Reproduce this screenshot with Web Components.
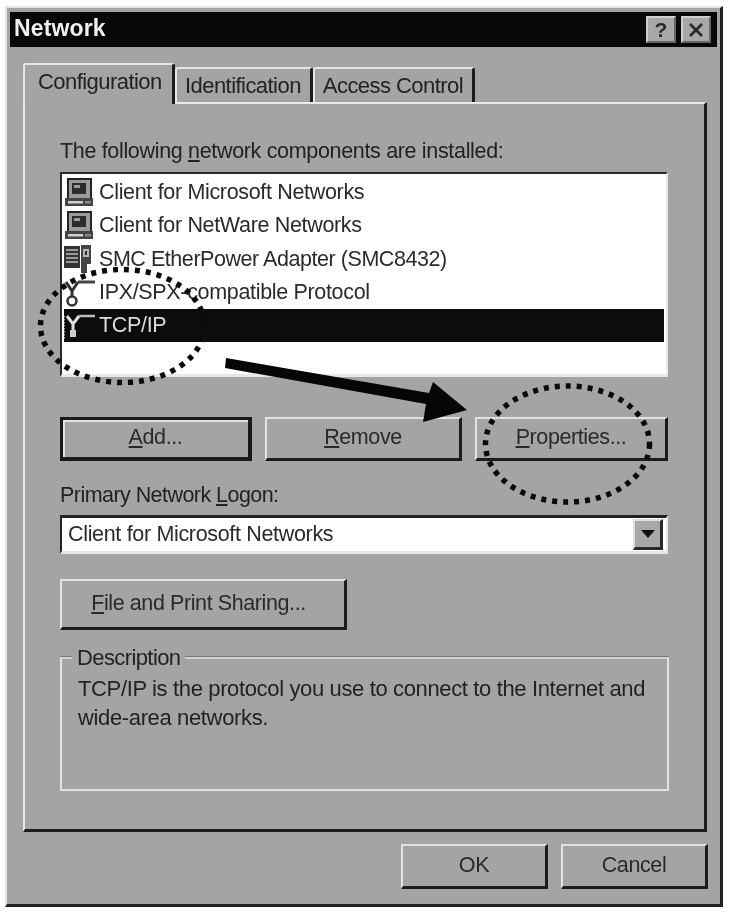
<!DOCTYPE html>
<html>
<head>
<meta charset="utf-8">
<title>Network</title>
<style>
  html, body { margin: 0; background: #fff; }
  body { width: 729px; height: 912px; overflow: hidden; position: relative; font-family: "Liberation Sans", Arial, sans-serif; }
  .blur { display: flow-root; filter: blur(0.6px); width: 729px; height: 912px; }
</style>
</head>
<body>
<div class="blur">
<win-dialog heading="Network">
  <win-tabs slot="tabs">
    <win-tab active>Configuration</win-tab>
    <win-tab>Identification</win-tab>
    <win-tab>Access Control</win-tab>
  </win-tabs>

  <win-label style="margin-top:34px">The following <u>n</u>etwork components are installed:</win-label>
  <win-list style="margin-top:8px">
    <win-row icon="client">Client for Microsoft Networks</win-row>
    <win-row icon="client">Client for NetWare Networks</win-row>
    <win-row icon="adapter" style="letter-spacing:-0.45px">SMC EtherPower Adapter (SMC8432)</win-row>
    <win-row icon="protocol">IPX/SPX-compatible Protocol</win-row>
    <win-row icon="protocol" selected>TCP/IP</win-row>
  </win-list>
  <div style="display:flex;gap:13px;margin-top:40px;width:608px">
    <win-button default style="width:192px;height:44px"><u>A</u>dd...</win-button>
    <win-button style="width:197px;height:44px"><u>R</u>emove</win-button>
    <win-button style="width:193px;height:44px"><u>P</u>roperties...</win-button>
  </div>
  <win-label style="margin-top:21px;letter-spacing:-0.55px">Primary Network <u>L</u>ogon:</win-label>
  <win-combo style="margin-top:7px">Client for Microsoft Networks</win-combo>
  <win-button style="width:287px;height:51px;margin-top:25px;padding-right:9px"><u>F</u>ile and Print Sharing...</win-button>
  <win-group heading="Description" style="margin-top:27px">TCP/IP is the protocol you use to connect to the Internet and wide-area networks.</win-group>

  <win-button slot="actions" style="width:147px;height:45px">OK</win-button>
  <win-button slot="actions" style="width:147px;height:45px">Cancel</win-button>
</win-dialog>
<call-outs></call-outs>
</div>

<script>
const FONT = `font-family: "Liberation Sans", Arial, sans-serif;`;

class WinDialog extends HTMLElement {
  constructor() {
    super();
    this.attachShadow({ mode: "open" });
  }
  connectedCallback() {
    this.shadowRoot.innerHTML = `
      <style>
        :host {
          display: block; box-sizing: border-box;
          width: 718px; height: 901px; margin: 6px 0 0 5px; padding: 4px 2px 0 3px;
          background: #a4a4a4; color: #1d1d1d; ${FONT}
          border-style: solid; border-width: 2px 3px 3px 2px;
          border-color: #e4e4e4 #222 #222 #e4e4e4;
        }
        .title {
          display: flex; align-items: center; height: 35px; background: #080808;
          margin-right: 1px; padding: 0 6px 0 4px;
          color: #f0f0f0; font-size: 23px; font-weight: bold; letter-spacing: 0.15px;
        }
        .title span { flex: 1; padding-bottom: 3px; }
        .cap {
          display: flex; align-items: center; justify-content: center; box-sizing: border-box;
          width: 30px; height: 27px; margin-left: 5px;
          background: #a8a8a8; color: #2a2a2a; font-size: 21px; font-weight: bold;
          border-style: solid; border-width: 2px;
          border-color: #cfcfcf #666 #666 #cfcfcf;
        }
        .tabs { margin: 16px 0 0 13px; height: 39px; position: relative; z-index: 1; }
        .panel {
          box-sizing: border-box; margin-left: 13px; width: 684px; height: 730px;
          padding: 0 36px 0 35px;
          border-style: solid; border-width: 2px 3px 3px 2px;
          border-color: #eaeaea #1c1c1c #1c1c1c #eaeaea;
        }
        .actions { display: flex; justify-content: flex-end; gap: 13px; margin: 12px 10px 0 0; }
      </style>
      <div class="title"><span>${this.getAttribute("heading")}</span>
        <div class="cap">?</div>
        <div class="cap"><svg width="18" height="16" viewBox="0 0 18 16"><path d="M3 2 L15 14 M15 2 L3 14" stroke="#2a2a2a" stroke-width="2.8" fill="none"/></svg></div>
      </div>
      <div class="tabs"><slot name="tabs"></slot></div>
      <div class="panel"><slot></slot></div>
      <div class="actions"><slot name="actions"></slot></div>`;
  }
}

class WinTabs extends HTMLElement {
  constructor() {
    super();
    this.attachShadow({ mode: "open" }).innerHTML = `
      <style>:host { display: flex; align-items: flex-end; height: 100%; }</style>
      <slot></slot>`;
  }
}

class WinTab extends HTMLElement {
  constructor() {
    super();
    this.attachShadow({ mode: "open" }).innerHTML = `
      <style>
        :host {
          display: flex; box-sizing: border-box; align-items: center; justify-content: center;
          height: 35px; padding: 0 9px 0 8px; margin-bottom: 0;
          font-size: 22px; letter-spacing: -0.55px; color: #222;
          border-style: solid; border-width: 2px 3px 0 2px;
          border-color: #e6e6e6 #1c1c1c #1c1c1c #e6e6e6;
          border-radius: 3px 3px 0 0;
          background: #a4a4a4;
        }
        :host([active]) {
          height: 41px; margin-bottom: -2px; padding: 0 8px 6px 13px; width: 152px;
          position: relative; z-index: 2; justify-content: flex-start;
        }
      </style>
      <slot></slot>`;
  }
}

class WinLabel extends HTMLElement {
  constructor() {
    super();
    this.attachShadow({ mode: "open" }).innerHTML = `
      <style>
        :host { display: block; height: 26px; line-height: 26px; font-size: 21.5px; letter-spacing: -0.33px; color: #222; white-space: nowrap; }
      </style>
      <slot></slot>`;
  }
}

class WinList extends HTMLElement {
  constructor() {
    super();
    this.attachShadow({ mode: "open" }).innerHTML = `
      <style>
        :host {
          display: block; box-sizing: border-box; width: 608px; height: 205px;
          background: #fff; padding: 2px 2px 0 2px;
          border-style: solid; border-width: 2px 2px 3px 2px;
          border-color: #2a2a2a #e8e8e8 #e8e8e8 #2a2a2a;
        }
      </style>
      <slot></slot>`;
  }
}

const ICONS = {
  client: `
    <rect x="4" y="1" width="23" height="20" fill="#9a9a9a" stroke="#222" stroke-width="2"/>
    <rect x="8" y="5" width="14" height="11" fill="#2c2c2c"/>
    <rect x="10" y="7" width="6" height="3" fill="#9c9c9c"/>
    <path d="M1 20 H29 V28 H1 Z" fill="#444"/>
    <rect x="4" y="23" width="15" height="2.5" fill="#cfcfcf"/>
    <rect x="21" y="23" width="6" height="2.5" fill="#888"/>`,
  adapter: `
    <rect x="0" y="2" width="16" height="22" fill="#333"/>
    <path d="M2 6 H14 M2 10 H14 M2 14 H14 M2 18 H14" stroke="#999" stroke-width="1.8"/>
    <path d="M17 1 H27 V20 H23 V29 H17 Z" fill="#444"/>
    <rect x="19" y="5" width="6" height="8" fill="#b5b5b5"/>
    <rect x="21" y="7" width="2" height="4" fill="#333"/>`,
  protocol: `
    <path d="M2 4 L8 13 L14 4 M8 13 V19" stroke="#333" stroke-width="3" fill="none"/>
    <path d="M14 4 H31" stroke="#444" stroke-width="3"/>
    <circle cx="8" cy="23" r="4.5" fill="none" stroke="#333" stroke-width="2.5"/>`,
  protocolSel: `
    <path d="M3 5 L9 13 L15 5 M9 13 V20" stroke="#ddd" stroke-width="3" fill="none"/>
    <path d="M15 5 H31" stroke="#bbb" stroke-width="2.5"/>
    <rect x="6" y="19" width="6" height="7" fill="#ccc"/>
    <path d="M0.5 5 V28" stroke="#aaa" stroke-width="1" stroke-dasharray="1.5 1.5"/>`
};

class WinRow extends HTMLElement {
  constructor() {
    super();
    this.attachShadow({ mode: "open" });
  }
  connectedCallback() {
    const selected = this.hasAttribute("selected");
    let icon = this.getAttribute("icon");
    if (selected) icon = "protocolSel";
    this.shadowRoot.innerHTML = `
      <style>
        :host {
          display: flex; align-items: center; height: 33.3px; box-sizing: border-box;
          font-size: 21.5px; letter-spacing: -0.33px; color: #2a2a2a; white-space: nowrap;
        }
        :host([selected]) { background: #0c0c0c; color: #dcdcdc; }
        svg { flex: none; width: 30px; height: 30px; margin-right: 5px; overflow: visible; }
      </style>
      <svg viewBox="0 0 30 30">${ICONS[icon]}</svg><slot></slot>`;
  }
}

class WinButton extends HTMLElement {
  constructor() {
    super();
    this.attachShadow({ mode: "open" }).innerHTML = `
      <style>
        :host {
          display: flex; box-sizing: border-box; align-items: center; justify-content: center; flex: none;
          font-size: 21.5px; letter-spacing: -0.4px; color: #2a2a2a; white-space: nowrap;
          background: #a4a4a4; padding-bottom: 2px;
          border-style: solid; border-width: 2px 3px 3px 2px;
          border-color: #e2e2e2 #1c1c1c #1c1c1c #e2e2e2;
        }
        :host([default]) {
          border-width: 3px 4px 4px 3px;
          border-color: #1a1a1a;
          box-shadow: inset 2px 2px 0 #e2e2e2;
        }
      </style>
      <slot></slot>`;
  }
}

class WinCombo extends HTMLElement {
  constructor() {
    super();
    this.attachShadow({ mode: "open" }).innerHTML = `
      <style>
        :host {
          display: flex; box-sizing: border-box; align-items: center; width: 608px; height: 39px;
          background: #fff; padding: 0 3px 0 6px;
          font-size: 21.5px; letter-spacing: -0.33px; color: #2a2a2a; white-space: nowrap;
          border-style: solid; border-width: 3px 2px 3px 2px;
          border-color: #222 #e8e8e8 #e8e8e8 #222;
        }
        .txt { flex: 1; }
        .btn {
          display: flex; align-items: center; justify-content: center; box-sizing: border-box;
          width: 30px; height: 31px; background: #a8a8a8;
          border-style: solid; border-width: 2px 3px 3px 2px;
          border-color: #dfdfdf #2a2a2a #2a2a2a #dfdfdf;
        }
      </style>
      <div class="txt"><slot></slot></div>
      <div class="btn"><svg width="14" height="8" viewBox="0 0 14 8"><path d="M0 0 H14 L7 8 Z" fill="#111"/></svg></div>`;
  }
}

class WinGroup extends HTMLElement {
  constructor() {
    super();
    this.attachShadow({ mode: "open" });
  }
  connectedCallback() {
    this.shadowRoot.innerHTML = `
      <style>
        :host {
          display: block; box-sizing: border-box; position: relative; width: 609px; height: 134px;
          padding: 15px 20px 0 16px;
          font-size: 22px; line-height: 29px; letter-spacing: -0.36px; color: #222;
          border: 2px solid #e2e2e2; border-top-color: #d2d2d2;
          box-shadow: 0 -1px 0 #777;
        }
        .cap {
          position: absolute; left: 10px; top: -14px; padding: 0 5px 0 5px;
          background: #a4a4a4; line-height: 26px; letter-spacing: -0.6px;
        }
      </style>
      <div class="cap">${this.getAttribute("heading")}</div>
      <slot></slot>`;
  }
}

// hand-drawn marks lying over the dialog
class CallOuts extends HTMLElement {
  constructor() {
    super();
    this.attachShadow({ mode: "open" }).innerHTML = `
      <style>
        :host { display: block; position: absolute; left: 0; top: 0; width: 729px; height: 912px; pointer-events: none; }
      </style>
      <svg width="729" height="912" viewBox="0 0 729 912">
        <ellipse cx="122.5" cy="326" rx="82" ry="56.5" fill="none" stroke="#0a0a0a" stroke-width="5.5" stroke-dasharray="5 6"/>
        <ellipse cx="567.5" cy="444" rx="82" ry="58" fill="none" stroke="#0a0a0a" stroke-width="5.5" stroke-dasharray="5 6"/>
        <path d="M226 358 L429 393 L433 382 L467 410 L423 422 L426 404 L225 368 Z" fill="#060606"/>
      </svg>`;
  }
}

customElements.define("win-dialog", WinDialog);
customElements.define("win-tabs", WinTabs);
customElements.define("win-tab", WinTab);
customElements.define("win-label", WinLabel);
customElements.define("win-list", WinList);
customElements.define("win-row", WinRow);
customElements.define("win-button", WinButton);
customElements.define("win-combo", WinCombo);
customElements.define("win-group", WinGroup);
customElements.define("call-outs", CallOuts);
</script>
</body>
</html>
